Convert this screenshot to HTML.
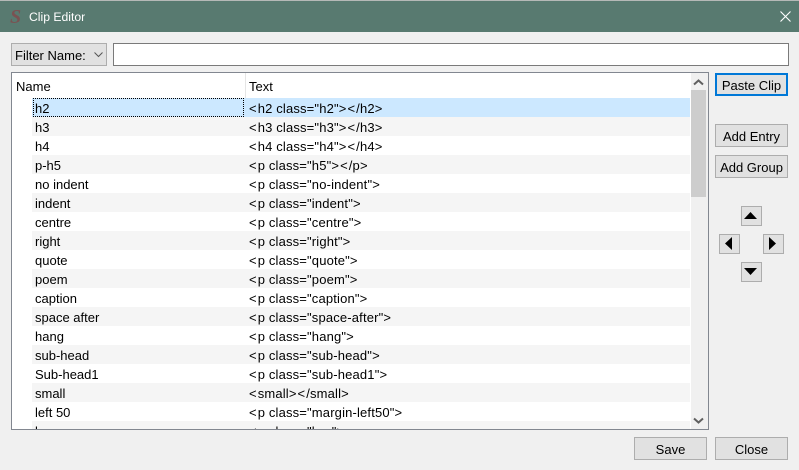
<!DOCTYPE html>
<html><head><meta charset="utf-8"><style>
html,body{margin:0;padding:0}
body{width:799px;height:470px;overflow:hidden;background:#f0f0f0;position:relative;font:13px "Liberation Sans",sans-serif;color:#000}
div{position:absolute;box-sizing:border-box}
.t{white-space:pre;line-height:19px;height:19px}
.x{left:249px;letter-spacing:.16px}
.x i{font-style:normal;letter-spacing:1.1px}
.btn{background:#e1e1e1;border:1px solid #adadad;text-align:center;line-height:23px;height:23px;width:73px;left:715px;white-space:pre}
.arr{background:#e1e1e1;border:1px solid #adadad;width:21px;height:20px}
.row{left:32px;width:658px;height:19px}
.g{background:#f5f5f5}
</style></head><body>
<div style="left:0;top:0;width:799px;height:32px;background:#587a70;border-top:1px solid #b5b9b7"></div>
<div style="left:10px;top:5px;font:italic bold 20px/24px 'Liberation Serif',serif;color:#7a5252">S</div>
<div class="t" style="left:29px;top:8px;color:#fff;font-size:12.2px">Clip Editor</div>
<svg style="position:absolute;left:780px;top:11px" width="11" height="11"><path d="M.5.5l10 10M10.5.5l-10 10" stroke="#fff" stroke-width="1.1" fill="none"/></svg>

<div style="left:11px;top:43px;width:96px;height:23px;background:#e1e1e1;border:1px solid #adadad"></div>
<div class="t" style="left:15px;top:46px">Filter Name:</div>
<svg style="position:absolute;left:94px;top:52px" width="9" height="6"><path d="M.5.5l4 4 4-4" stroke="#555" fill="none"/></svg>
<div style="left:113px;top:43px;width:676px;height:23px;background:#fff;border:1px solid #7a7a7a"></div>

<div style="left:11px;top:72px;width:698px;height:358px;background:#fff;border:1px solid #828790"></div>
<div class="t" style="left:16px;top:77px">Name</div>
<div style="left:245px;top:73px;width:1px;height:25px;background:#e5e5e5"></div>
<div class="t" style="left:249px;top:77px">Text</div>

<div class="row" style="top:98px;background:#cce8ff"></div>
<div class="row g" style="top:117px"></div>
<div class="row g" style="top:155px"></div>
<div class="row g" style="top:193px"></div>
<div class="row g" style="top:231px"></div>
<div class="row g" style="top:269px"></div>
<div class="row g" style="top:307px"></div>
<div class="row g" style="top:345px"></div>
<div class="row g" style="top:383px"></div>
<div class="row g" style="top:421px;height:8px"></div>
<div style="left:33px;top:98px;width:211px;height:19px;border:1px dotted #000"></div>

<div class="t" style="left:35px;top:99px">h2</div><div class="t x" style="top:99px"><i>&lt;</i>h2 class="h2"<i>&gt;</i><i>&lt;</i>/h2&gt;</div>
<div class="t" style="left:35px;top:118px">h3</div><div class="t x" style="top:118px"><i>&lt;</i>h3 class="h3"<i>&gt;</i><i>&lt;</i>/h3&gt;</div>
<div class="t" style="left:35px;top:137px">h4</div><div class="t x" style="top:137px"><i>&lt;</i>h4 class="h4"<i>&gt;</i><i>&lt;</i>/h4&gt;</div>
<div class="t" style="left:35px;top:156px">p-h5</div><div class="t x" style="top:156px"><i>&lt;</i>p class="h5"<i>&gt;</i><i>&lt;</i>/p&gt;</div>
<div class="t" style="left:35px;top:175px">no indent</div><div class="t x" style="top:175px"><i>&lt;</i>p class="no-indent"&gt;</div>
<div class="t" style="left:35px;top:194px">indent</div><div class="t x" style="top:194px"><i>&lt;</i>p class="indent"&gt;</div>
<div class="t" style="left:35px;top:213px">centre</div><div class="t x" style="top:213px"><i>&lt;</i>p class="centre"&gt;</div>
<div class="t" style="left:35px;top:232px">right</div><div class="t x" style="top:232px"><i>&lt;</i>p class="right"&gt;</div>
<div class="t" style="left:35px;top:251px">quote</div><div class="t x" style="top:251px"><i>&lt;</i>p class="quote"&gt;</div>
<div class="t" style="left:35px;top:270px">poem</div><div class="t x" style="top:270px"><i>&lt;</i>p class="poem"&gt;</div>
<div class="t" style="left:35px;top:289px">caption</div><div class="t x" style="top:289px"><i>&lt;</i>p class="caption"&gt;</div>
<div class="t" style="left:35px;top:308px">space after</div><div class="t x" style="top:308px"><i>&lt;</i>p class="space-after"&gt;</div>
<div class="t" style="left:35px;top:327px">hang</div><div class="t x" style="top:327px"><i>&lt;</i>p class="hang"&gt;</div>
<div class="t" style="left:35px;top:346px">sub-head</div><div class="t x" style="top:346px"><i>&lt;</i>p class="sub-head"&gt;</div>
<div class="t" style="left:35px;top:365px">Sub-head1</div><div class="t x" style="top:365px"><i>&lt;</i>p class="sub-head1"&gt;</div>
<div class="t" style="left:35px;top:384px">small</div><div class="t x" style="top:384px"><i>&lt;</i>small<i>&gt;</i><i>&lt;</i>/small&gt;</div>
<div class="t" style="left:35px;top:403px">left 50</div><div class="t x" style="top:403px"><i>&lt;</i>p class="margin-left50"&gt;</div>
<div style="left:32px;top:421px;width:658px;height:8px;overflow:hidden">
<div class="t" style="left:3px;top:1px">lower</div><div class="t x" style="left:217px;top:1px"><i>&lt;</i>p class="low"&gt;</div>
</div>
<div style="left:12px;top:429px;width:696px;height:1px;background:#828790"></div>

<div style="left:691px;top:73px;width:17px;height:356px;background:#f0f0f0"></div>
<div style="left:691px;top:90px;width:15px;height:107px;background:#cdcdcd"></div>
<svg style="position:absolute;left:693px;top:79px" width="11" height="7"><path d="M1 5.5l4.5-4 4.5 4" stroke="#606060" stroke-width="2" fill="none"/></svg>
<svg style="position:absolute;left:693px;top:417px" width="11" height="7"><path d="M1 1.5l4.5 4 4.5-4" stroke="#606060" stroke-width="2" fill="none"/></svg>

<div class="btn" style="top:73px;border:2px solid #0078d7;line-height:21px">Paste Clip</div>
<div class="btn" style="top:124px">Add Entry</div>
<div class="btn" style="top:155px">Add Group</div>

<div class="arr" style="left:741px;top:206px"><svg style="position:absolute;left:2px;top:5px" width="14" height="8"><path d="M6.5 0l6.5 7H0z"/></svg></div>
<div class="arr" style="left:719px;top:234px"><svg style="position:absolute;left:5px;top:2px" width="8" height="14"><path d="M0 6.5L7 0v13z"/></svg></div>
<div class="arr" style="left:763px;top:234px"><svg style="position:absolute;left:5px;top:2px" width="8" height="14"><path d="M7 6.5L0 0v13z"/></svg></div>
<div class="arr" style="left:741px;top:262px"><svg style="position:absolute;left:2px;top:5px" width="14" height="8"><path d="M6.5 7L13 0H0z"/></svg></div>

<div class="btn" style="left:634px;top:437px">Save</div>
<div class="btn" style="top:437px">Close</div>
</body></html>
